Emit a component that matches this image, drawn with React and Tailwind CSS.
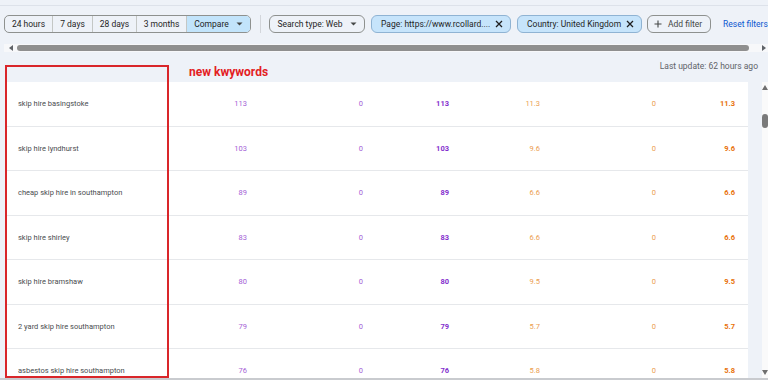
import React from "react";

const rows = [
  ["skip hire basingstoke", "113", "0", "113", "11.3", "0", "11.3"],
  ["skip hire lyndhurst", "103", "0", "103", "9.6", "0", "9.6"],
  ["cheap skip hire in southampton", "89", "0", "89", "6.6", "0", "6.6"],
  ["skip hire shirley", "83", "0", "83", "6.6", "0", "6.6"],
  ["skip hire bramshaw", "80", "0", "80", "9.5", "0", "9.5"],
  ["2 yard skip hire southampton", "79", "0", "79", "5.7", "0", "5.7"],
  ["asbestos skip hire southampton", "76", "0", "76", "5.8", "0", "5.8"],
];

function Caret() {
  return (
    <svg width="7" height="4" viewBox="0 0 7 4" className="ml-[7px]">
      <path d="M0.5 0.5 L3.5 3.5 L6.5 0.5 Z" fill="#444746" />
    </svg>
  );
}

function X() {
  return (
    <svg width="8" height="8" viewBox="0 0 8 8" className="ml-auto">
      <path d="M1 1 L7 7 M7 1 L1 7" stroke="#1f1f1f" strokeWidth="1.3" />
    </svg>
  );
}

export default function App() {
  return (
    <div
      className="w-[768px] h-[380px] overflow-hidden bg-[#eef2f8] relative text-[#1f1f1f]"
      style={{ fontFamily: "Roboto, 'Liberation Sans', sans-serif" }}
    >
      <div className="h-[6px] border-b border-[#dde2ea]" />
      {/* filter bar */}
      <div className="flex items-center mt-[9px] h-[18px] pl-[4px] text-[8.5px] text-[#1f1f1f]">
        <div className="flex h-[18px] border border-[#8e918f] rounded-[5px] overflow-hidden">
          <div className="w-[48px] flex items-center justify-center border-r border-[#c4c7c5]">24 hours</div>
          <div className="w-[40px] flex items-center justify-center border-r border-[#c4c7c5]">7 days</div>
          <div className="w-[44px] flex items-center justify-center border-r border-[#c4c7c5]">28 days</div>
          <div className="w-[50px] flex items-center justify-center border-r border-[#c4c7c5]">3 months</div>
          <div className="w-[63px] flex items-center justify-center bg-[#c2e4fb]">
            Compare
            <Caret />
          </div>
        </div>
        <div className="w-px h-[18px] bg-[#d3d6db] ml-[9px]" />
        <div className="ml-[8px] w-[96px] h-[18px] flex items-center justify-center border border-[#8e918f] rounded-[6px]">
          Search type: Web
          <Caret />
        </div>
        <div className="ml-[6px] w-[140px] h-[18px] flex items-center pl-[9px] pr-[7px] bg-[#c6e4fb] border border-[#8fb3d3] rounded-[6px]">
          <span>Page: https://www.rcollard....</span>
          <X />
        </div>
        <div className="ml-[6px] w-[125px] h-[18px] flex items-center pl-[9px] pr-[7px] bg-[#c6e4fb] border border-[#8fb3d3] rounded-[6px]">
          <span>Country: United Kingdom</span>
          <X />
        </div>
        <div className="ml-[5px] w-[64px] h-[18px] flex items-center pl-[6px] border border-[#8e918f] rounded-[6px] text-[#444746]">
          <svg width="8" height="8" viewBox="0 0 8 8">
            <path d="M4 0.5 V7.5 M0.5 4 H7.5" stroke="#444746" strokeWidth="1.1" />
          </svg>
          <span className="ml-[6px]">Add filter</span>
        </div>
        <div className="ml-[12px] text-[#0b57d0] whitespace-nowrap">Reset filters</div>
      </div>
      {/* horizontal scrollbar */}
      <div className="mt-[11px] h-[8px] flex items-center bg-[#f7f8fa] ml-[4px]">
        <svg width="5" height="6" viewBox="0 0 5 6" className="ml-[5px]">
          <path d="M4 0 L0 3 L4 6 Z" fill="#5f6368" />
        </svg>
        <div className="ml-[3px] w-[732px] h-[6px] rounded-full bg-[#8f8f8f]" />
        <svg width="5" height="6" viewBox="0 0 5 6" className="ml-[13px]">
          <path d="M0 0 L4 3 L0 6 Z" fill="#5f6368" />
        </svg>
      </div>
      {/* header */}
      <div className="h-[30px] flex">
        <div className="ml-[189px] mt-[14px] text-[12px] font-bold leading-none text-[#e3201f]">
          new kwywords
        </div>
        <div className="ml-auto mr-[10px] mt-[10px] text-[8.5px] leading-none text-[#5f6368]">
          Last update: 62 hours ago
        </div>
      </div>
      {/* table */}
      <div className="flex h-[296px]">
        <div className="ml-[6px] w-[742px] bg-white">
          {rows.map((r, i) => (
            <div
              key={i}
              className="h-[44.5px] border-b border-[#e6e8eb] grid grid-cols-[174px_67px_116px_86px_91px_116px_79px_1fr] items-center text-[7.5px]"
            >
              <div className="pl-[12px] text-[#4a4d50] whitespace-nowrap">{r[0]}</div>
              <div className="text-right text-[#a45fd6]">{r[1]}</div>
              <div className="text-right text-[#a45fd6]">{r[2]}</div>
              <div className="text-right font-bold text-[#8430ce]">{r[3]}</div>
              <div className="text-right text-[#eb9d4f]">{r[4]}</div>
              <div className="text-right text-[#eb9d4f]">{r[5]}</div>
              <div className="text-right font-bold text-[#e8710a]">{r[6]}</div>
              <div />
            </div>
          ))}
        </div>
        <div className="ml-[14px] w-[6px] bg-[#fafafa] flex flex-col items-center">
          <svg width="6" height="5" viewBox="0 0 6 5" className="mt-[3px]">
            <path d="M0 5 L3 0 L6 5 Z" fill="#6f6f6f" />
          </svg>
          <div className="mt-[24px] w-[6px] h-[14px] rounded-[3px] bg-[#7a7a7a]" />
          <svg width="6" height="5" viewBox="0 0 6 5" className="mt-auto mb-[3px]">
            <path d="M0 0 L6 0 L3 5 Z" fill="#6f6f6f" />
          </svg>
        </div>
      </div>
      <div className="h-[2px] bg-[#c9cbcf]" />
      {/* red annotation box */}
      <div className="absolute left-[5px] top-[65px] w-[164px] h-[313px] border-2 border-[#d9262a]" />
    </div>
  );
}
